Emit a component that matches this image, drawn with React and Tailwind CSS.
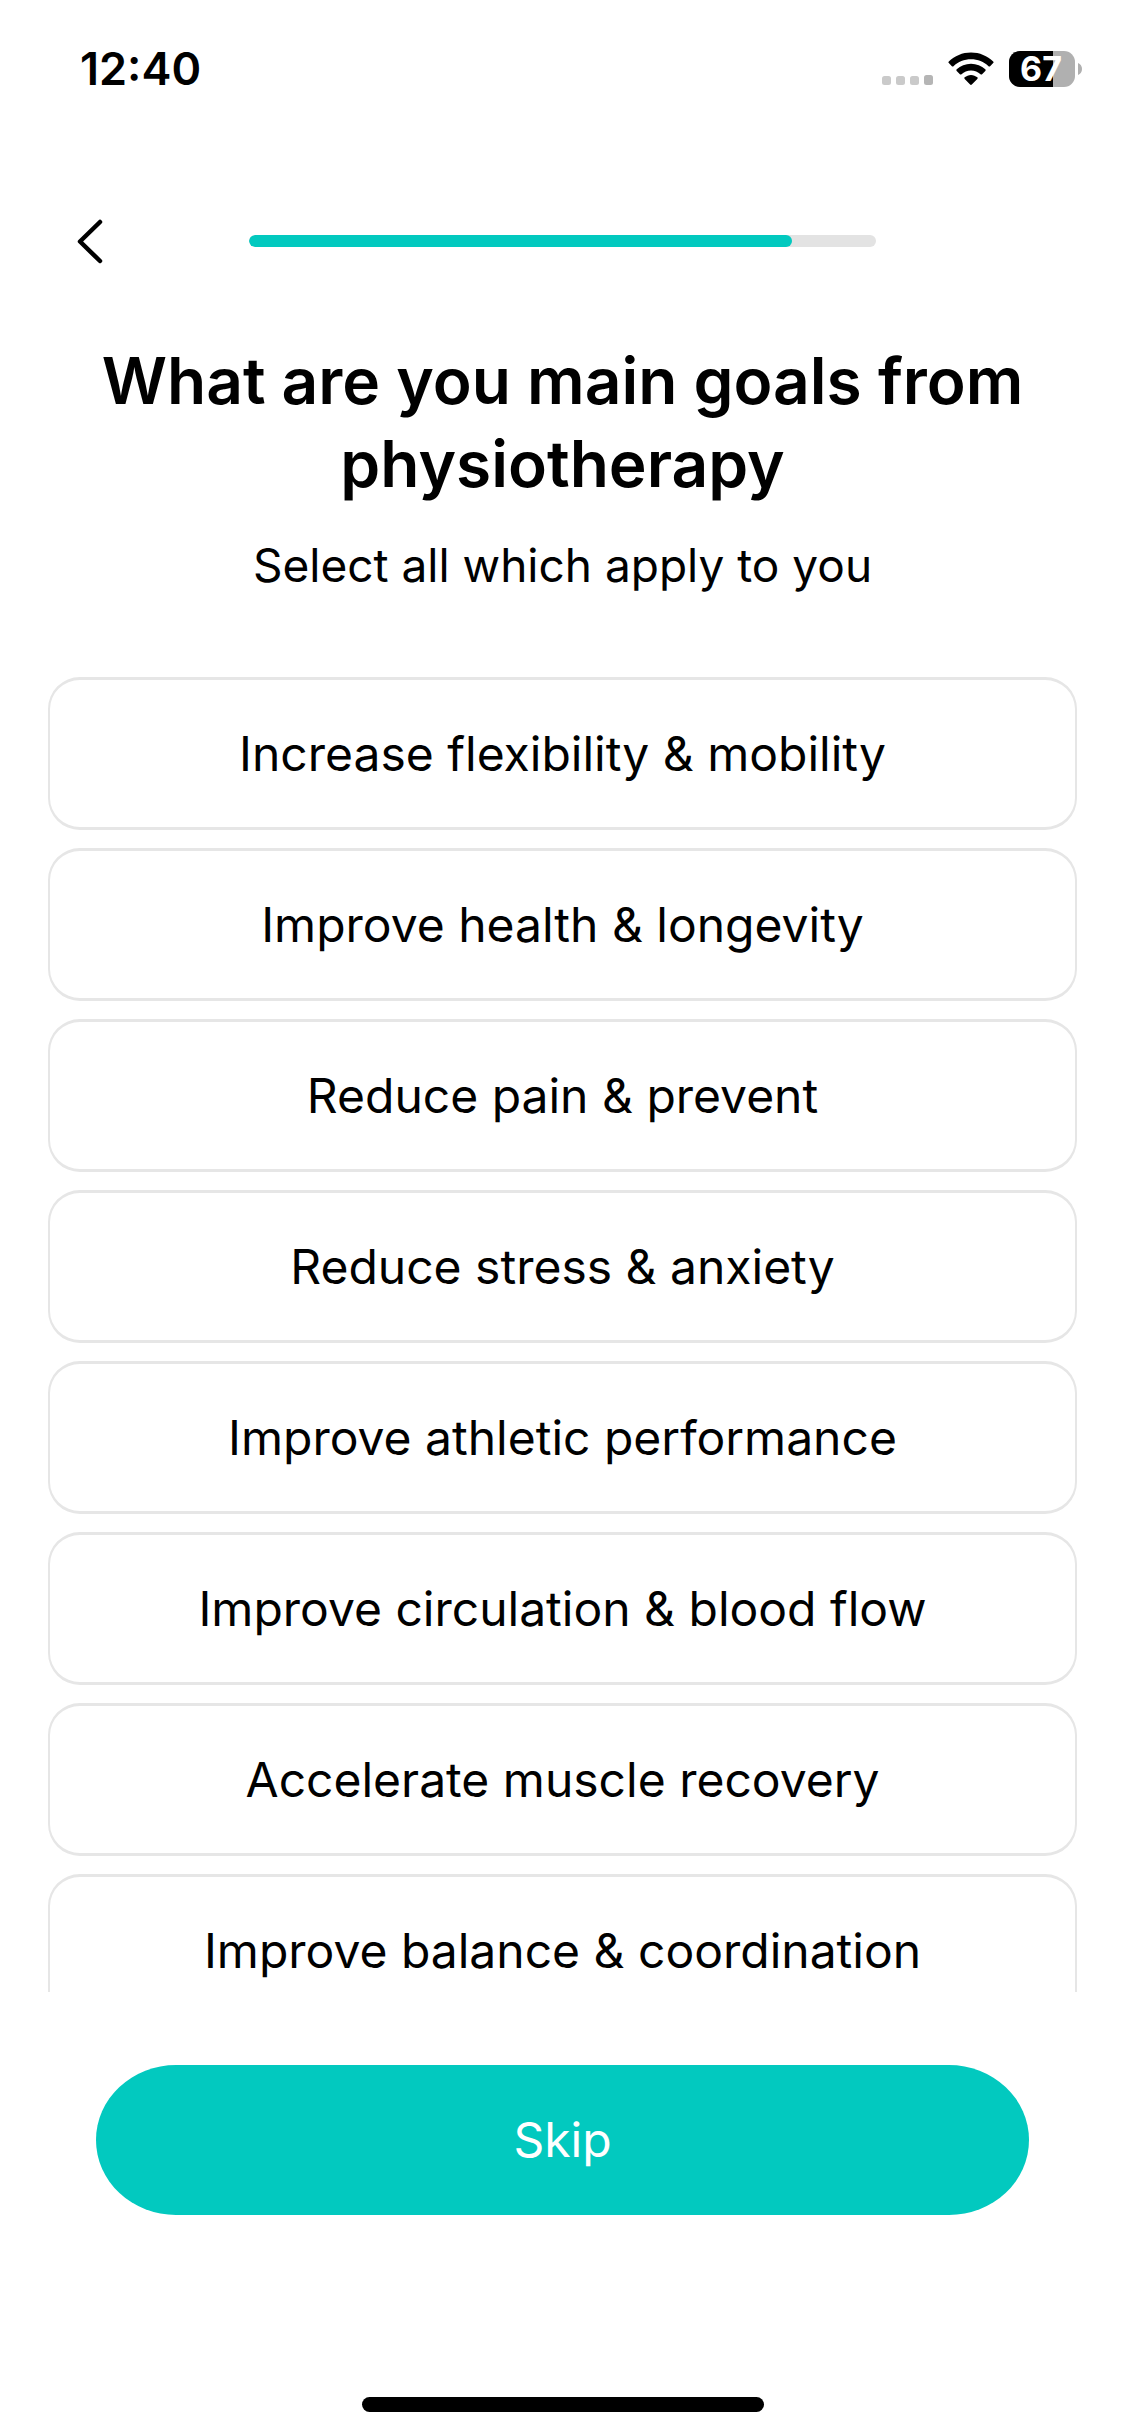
import React, { useState } from "react";

const goals = [
  "Increase flexibility & mobility",
  "Improve health & longevity",
  "Reduce pain & prevent",
  "Reduce stress & anxiety",
  "Improve athletic performance",
  "Improve circulation & blood flow",
  "Accelerate muscle recovery",
  "Improve balance & coordination",
];

const SignalDots = () => (
  <svg viewBox="0 0 52 36" className="h-9 w-[52px]" aria-hidden="true">
    <rect x="0" y="25" width="9" height="9" rx="2.5" fill="#cacaca" />
    <rect x="14" y="25" width="9" height="9" rx="2.5" fill="#cacaca" />
    <rect x="28" y="25" width="9" height="9" rx="2.5" fill="#cacaca" />
    <rect x="42" y="24" width="9" height="10" rx="2.5" fill="#b5b5b5" />
  </svg>
);

const WifiIcon = () => (
  <svg viewBox="0 0 46 34" className="h-[34px] w-[46px]" aria-hidden="true">
    <path d="M23 0.5c8.600 0 16.400 3.400 22.200 8.900.5.5.5 1.200 0 1.700l-3.100 3.100c-.4.5-1.100.5-1.600 0C35.900 9.900 29.700 7.300 23 7.300S10.100 9.900 5.500 14.200c-.5.5-1.200.5-1.600 0L.8 11.100c-.5-.5-.5-1.200 0-1.700C6.600 3.900 14.400.5 23 .5Z" />
    <path d="M23 11.700c5.500 0 10.500 2.100 14.300 5.600.5.5.5 1.200 0 1.700l-3.200 3.200c-.4.4-1.100.4-1.600 0-2.500-2.300-5.800-3.700-9.500-3.700s-7 1.400-9.500 3.700c-.5.4-1.200.4-1.600 0L8.700 19c-.5-.5-.5-1.200 0-1.700 3.800-3.500 8.800-5.600 14.300-5.600Z" />
    <path d="M23 22.900c2.400 0 4.600.9 6.300 2.400.5.4.5 1.100 0 1.600l-5.500 5.600c-.5.5-1.200.5-1.700 0l-5.400-5.600c-.5-.5-.5-1.200 0-1.600 1.700-1.500 3.900-2.400 6.300-2.400Z" />
  </svg>
);

const Battery = ({ level }) => (
  <div className="flex items-center gap-[3px]">
    <div className="relative flex h-9 w-[66px] items-center justify-center rounded-[11px] bg-[#b0b0b0] pr-0.5">
      <div
        className="absolute inset-y-0 left-0 rounded-l-[11px] bg-black"
        style={{ width: `${level}%` }}
      />
      <span className="relative text-[34px] leading-[44px] font-bold text-white">{level}</span>
    </div>
    <svg viewBox="0 0 4 12" className="h-3 w-1" aria-hidden="true">
      <path d="M0 0c2.500 1 4 3.300 4 6s-1.500 5-4 6Z" fill="#b0b0b0" />
    </svg>
  </div>
);

const StatusBar = () => (
  <div className="flex h-[138px] items-center justify-between pr-[43px] pl-20">
    <span className="text-[45px] leading-[52px] font-semibold">12:40</span>
    <div className="flex items-center gap-[15px]">
      <div className="flex items-center gap-[14px]">
        <SignalDots />
        <WifiIcon />
      </div>
      <Battery level={67} />
    </div>
  </div>
);

const NavBar = ({ step, total }) => (
  <div className="grid h-[201px] grid-cols-[249px_1fr_249px] items-start pt-[77px]">
    <button type="button" aria-label="Back" className="w-fit cursor-pointer pl-[75px]">
      <svg
        viewBox="0 0 30 52"
        className="h-[52px] w-[30px]"
        fill="none"
        stroke="currentColor"
        strokeWidth="4.500"
        strokeLinecap="round"
        strokeLinejoin="round"
      >
        <path d="M25 7 5 26.500 25 46" />
      </svg>
    </button>
    <div
      role="progressbar"
      aria-label="Onboarding progress"
      aria-valuenow={step}
      aria-valuemax={total}
      className="mt-5 h-3 overflow-hidden rounded-full bg-[#e3e3e3]"
    >
      <div
        className="h-full rounded-full bg-[#02c9bf]"
        style={{ width: `${(step / total) * 100}%` }}
      />
    </div>
  </div>
);

const GoalOption = ({ label, selected, onToggle }) => (
  <button
    type="button"
    aria-pressed={selected}
    onClick={onToggle}
    className={`h-[153px] w-full shrink-0 cursor-pointer rounded-[32px] border-x-2 border-y-3 text-[48px] leading-[60px] ${
      selected ? "border-[#02c9bf]" : "border-[#e6e6e6]"
    }`}
  >
    {label}
  </button>
);

const App = () => {
  const [selected, setSelected] = useState([]);

  const toggle = (goal) => {
    setSelected((prev) =>
      prev.includes(goal) ? prev.filter((g) => g !== goal) : [...prev, goal]
    );
  };

  return (
    <div className="flex h-screen flex-col bg-white font-[Inter,'Liberation_Sans',sans-serif] text-black">
      <StatusBar />
      <NavBar step={13} total={15} />

      <header className="px-12 text-center">
        <h1 className="text-[64px] leading-[83px] font-semibold">
          What are you main goals from physiotherapy
        </h1>
        <p className="mt-[30px] text-[46px] leading-[60px]">Select all which apply to you</p>
      </header>

      <main className="mt-[82px] flex min-h-0 flex-1 flex-col gap-[18px] overflow-y-auto px-12 [scrollbar-width:none]">
        {goals.map((goal) => (
          <GoalOption
            key={goal}
            label={goal}
            selected={selected.includes(goal)}
            onToggle={() => toggle(goal)}
          />
        ))}
      </main>

      <footer className="flex flex-col px-24 pt-[73px] pb-6">
        <button
          type="button"
          className="h-[150px] w-full cursor-pointer rounded-[80px/75px] bg-[#02c9bf] text-[48px] leading-[60px] text-white"
        >
          {selected.length > 0 ? "Next" : "Skip"}
        </button>
        <div className="mt-[182px] h-[15px] w-[402px] self-center rounded-full bg-black" />
      </footer>
    </div>
  );
};

export default App;
